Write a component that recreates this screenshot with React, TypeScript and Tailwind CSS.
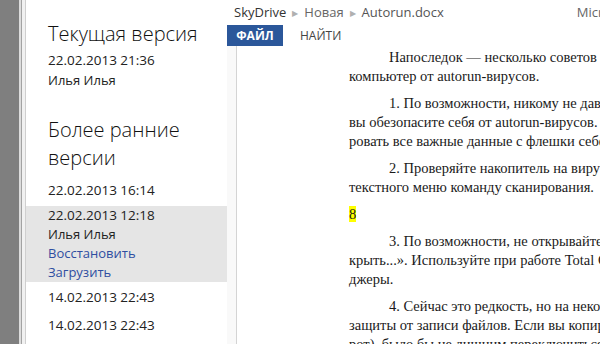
import { Fragment } from 'react'

const paragraphs: { lines: string[]; mark?: boolean }[] = [
  {
    lines: [
      'Напоследок — несколько советов о том, как защитить свой',
      'компьютер от autorun-вирусов.',
    ],
  },
  {
    lines: [
      '1. По возможности, никому не давайте свою флешку. Так',
      'вы обезопасите себя от autorun-вирусов. Если нужно скопи-',
      'ровать все важные данные с флешки себе на компьютер.',
    ],
  },
  {
    lines: [
      '2. Проверяйте накопитель на вирусы, выбрав из кон-',
      'текстного меню команду сканирования.',
    ],
  },
  { lines: ['8'], mark: true },
  {
    lines: [
      '3. По возможности, не открывайте флешку через «От-',
      'крыть...». Используйте при работе Total Commander и мене-',
      'джеры.',
    ],
  },
  {
    lines: [
      '4. Сейчас это редкость, но на некоторых флешках есть',
      'защиты от записи файлов. Если вы копируете (а не наобо-',
      'рот), было бы не лишним переключиться в режим чтения.',
    ],
  },
]

export default function App() {
  return (
    <div
      className="flex h-[344px] w-[600px] overflow-hidden bg-white text-[#222]"
      style={{ fontFamily: '"Open Sans", "Noto Sans", sans-serif' }}
    >
      {/* left frame edge */}
      <div className="w-[19px] shrink-0 bg-[#7f7f7f]" />
      <div className="w-[2px] shrink-0 bg-[#dcdcdc]" />
      <div className="w-[1px] shrink-0 bg-[#a3a3a3]" />
      <div className="w-[3px] shrink-0 bg-[#f1f1f1]" />
      <div className="w-[1px] shrink-0 bg-[#cfcfcf]" />

      {/* versions panel */}
      <aside className="w-[201px] shrink-0 pt-[20px]">
        <div className="px-[22px]">
          <h2 className="text-[20px] leading-[28px] font-light text-[#111]">Текущая версия</h2>
          <div className="mt-[2px] text-[13.5px] leading-[20px]">22.02.2013 21:36</div>
          <div className="text-[13px] leading-[20px]">Илья Илья</div>
          <h2 className="mt-[26px] text-[20px] leading-[28px] font-light text-[#111]">
            Более ранние
            <br />
            версии
          </h2>
        </div>
        <div className="mt-[4px] flex h-[28px] items-center px-[22px] text-[13.5px]">
          22.02.2013 16:14
        </div>
        <div className="mt-[2px] bg-[#e5e5e5] px-[22px] text-[13.5px] leading-[19px]">
          <div>22.02.2013 12:18</div>
          <div className="text-[13px]">Илья Илья</div>
          <div className="text-[13px] text-[#2f4ea1]">Восстановить</div>
          <div className="text-[13px] text-[#2f4ea1]">Загрузить</div>
        </div>
        <div className="mt-[1px] flex h-[28px] items-center px-[22px] text-[13.5px]">
          14.02.2013 22:43
        </div>
        <div className="flex h-[28px] items-center px-[22px] text-[13.5px]">14.02.2013 22:43</div>
      </aside>

      {/* document */}
      <main className="flex min-w-0 flex-1 flex-col overflow-hidden">
        <div className="flex h-[25px] shrink-0 items-center pl-[7px] text-[13px] whitespace-nowrap">
          <span className="text-[#333]">SkyDrive</span>
          <span className="mx-[6px] text-[8px] text-[#b0b0b0]">▶</span>
          <span className="text-[#666]">Новая</span>
          <span className="mx-[6px] text-[8px] text-[#b0b0b0]">▶</span>
          <span className="text-[#555]">Autorun.docx</span>
          <span className="ml-[133px] text-[#666]">Microsoft</span>
        </div>
        <div className="flex h-[21px] shrink-0 items-stretch text-[12px]">
          <div className="flex w-[56px] items-center justify-center bg-[#2b579a] font-bold text-white">
            ФАЙЛ
          </div>
          <div className="ml-[17px] flex items-center text-[#444]">НАЙТИ</div>
        </div>
        <div className="flex min-h-0 flex-1">
          <div className="w-[10px] shrink-0 border-r border-[#d4d4d4] bg-[#f9f9f9]" />
          <div
            className="pt-[2px] pl-[112px] text-[14.5px] leading-[19px] whitespace-nowrap text-[#1a1a1a]"
            style={{ fontFamily: '"Liberation Serif", serif' }}
          >
            {paragraphs.map((p, i) => (
              <div key={i} className="mb-[8px]">
                {p.lines.map((line, j) => (
                  <Fragment key={j}>
                    {p.mark ? (
                      <div>
                        <span className="bg-[#ffff00]">{line}</span>
                      </div>
                    ) : (
                      <div className={j === 0 ? 'pl-[40px]' : ''}>{line}</div>
                    )}
                  </Fragment>
                ))}
              </div>
            ))}
          </div>
        </div>
      </main>
    </div>
  )
}
